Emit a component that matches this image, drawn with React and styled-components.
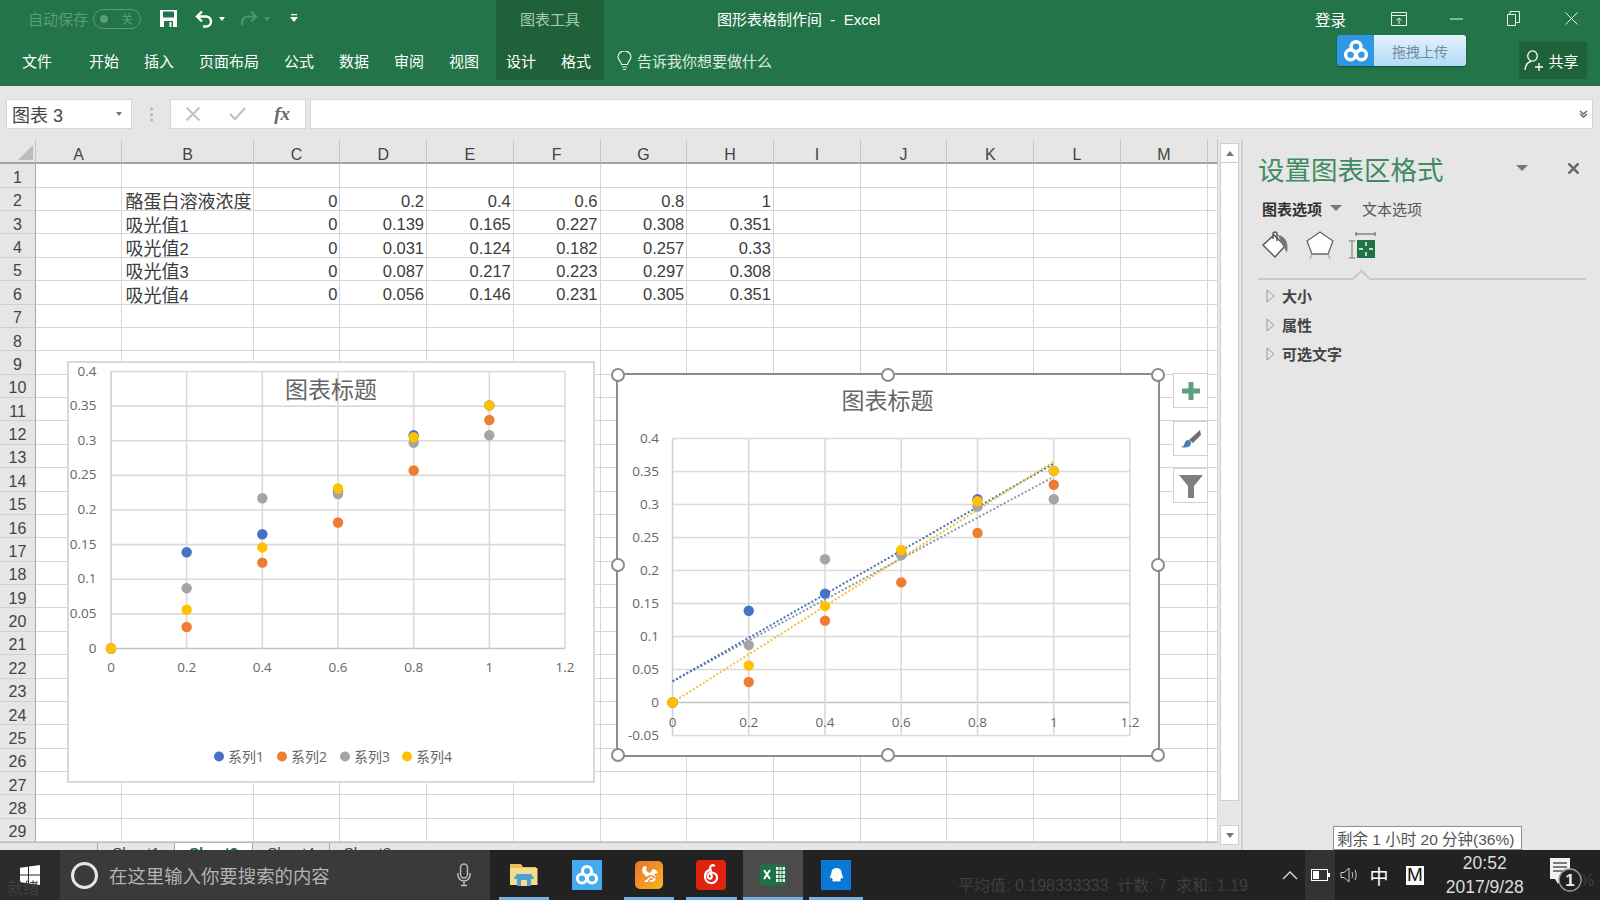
import React from "react";
import styled, { createGlobalStyle } from "styled-components";

const Global = createGlobalStyle`
  html, body { margin: 0; padding: 0; background: #e6e6e6; }
  * { box-sizing: border-box; }
`;
const FONT = `"Liberation Sans", "Noto Sans CJK SC", sans-serif`;
const CHART_FONT = `"Open Sans", "Noto Sans CJK SC", sans-serif`;

const Page = styled.div`
  position: relative; width: 1600px; height: 900px; overflow: hidden;
  display: flex; flex-direction: column; background: #e6e6e6; font-family: ${FONT};
`;

/* ---------- ribbon ---------- */
const Ribbon = styled.header`
  position: relative; height: 86px; flex: none; background: #237549; color: #fff;
  display: grid; grid-template-columns: 496px 108px 1fr; grid-template-rows: 43px 37px;
`;
const Qat = styled.div`display: flex; align-items: center; padding: 0 0 6px 28px;`;
const AutoSave = styled.span`font-size: 15px; color: #5c9c78; width: 65px;`;
const Toggle = styled.span`
  width: 48px; height: 20px; border: 1px solid #5c9c78; border-radius: 10px; display: flex;
  align-items: center; justify-content: space-between; padding: 0 7px 0 6px; color: #5c9c78; font-size: 12px;
  &::before { content: ""; width: 8px; height: 8px; border-radius: 50%; background: #5c9c78; }
`;
const QatIcon = styled.span`display: flex; align-items: center; margin-left: ${(p) => p.$gap}px;`;
const ToolTitle = styled.div`
  background: #1f6239; color: #a8c9b5; font-size: 15px; display: flex; align-items: center;
  justify-content: center; padding-bottom: 6px;
`;
const TitleSide = styled.div`display: flex; align-items: center; padding: 0 0 6px 113px;`;
const DocTitle = styled.span`font-size: 15px; width: 598px; white-space: pre;`;
const SignIn = styled.span`font-size: 15.5px; width: 55px;`;
const WinBtn = styled.span`width: 57.5px; display: flex; justify-content: center; align-items: center;`;
const MenuRow = styled.nav`display: flex; align-items: center; padding: 0 0 2px 22px;`;
const MenuItem = styled.span`font-size: 15px; margin-left: ${(p) => p.$gap}px; white-space: nowrap;`;
const ToolTabs = styled.div`
  background: #1f6239; display: flex; align-items: center; justify-content: center; gap: 25px;
  font-size: 15px; padding: 0 3px 2px 0;
`;
const TellSide = styled.div`display: flex; align-items: center; padding: 0 0 2px 13px; gap: 5px;`;
const TellMe = styled.span`font-size: 15px; color: #dcebe2;`;
const Upload = styled.div`
  position: absolute; left: 1337px; top: 35px; width: 129px; height: 31px; border-radius: 3px; overflow: hidden;
  display: flex; box-shadow: 0 1px 2px #14502e;
`;
const UploadIcon = styled.span`width: 37px; background: #2f97e4; display: flex; align-items: center; justify-content: center;`;
const UploadLabel = styled.span`
  flex: 1; background: linear-gradient(#e4f2fc, #b3dbf6); color: #6f8ba3; font-size: 14px;
  display: flex; align-items: center; justify-content: center;
`;
const Share = styled.div`
  position: absolute; left: 1519px; top: 42px; width: 68px; height: 37px; background: #1f6239;
  display: flex; align-items: center; justify-content: center; gap: 4px; font-size: 15px; padding-right: 3px;
`;

/* ---------- formula bar ---------- */
const FormulaBar = styled.div`
  height: 54px; flex: none; display: flex; align-items: flex-start; padding: 13px 7px 0 6px; color: #444;
`;
const NameBox = styled.div`
  width: 126px; height: 30px; background: #fff; border: 1px solid #d6d6d6; display: flex; align-items: center;
  padding: 0 9px 0 5px; justify-content: space-between; font-size: 18px; color: #444;
`;
const Caret = styled.span`
  width: 0; height: 0; border-left: ${(p) => (p.$big ? 6 : 3)}px solid transparent; border-right: ${(p) => (p.$big ? 6 : 3)}px solid transparent;
  border-top: ${(p) => (p.$big ? 6 : 4)}px solid ${(p) => p.$color || "#777"};
`;
const Grip = styled.span`
  width: 38px; text-align: center; color: #aaa; font-size: 15px; line-height: 30px; font-weight: 700;
`;
const FxBox = styled.div`
  width: 136px; height: 30px; background: #fff; border: 1px solid #d6d6d6; display: flex; align-items: center;
  justify-content: space-between; padding: 0 15px 0 15px;
`;
const Fx = styled.span`font-family: "Liberation Serif", serif; font-style: italic; font-weight: 700; font-size: 19px; color: #666;`;
const Input = styled.div`
  flex: 1; height: 30px; background: #fff; border: 1px solid #d6d6d6; margin-left: 4px; display: flex;
  align-items: center; justify-content: flex-end; padding-right: 4px;
`;

/* ---------- work area ---------- */
const Work = styled.div`flex: 1; display: flex; min-height: 0;`;
const SheetCol = styled.div`width: 1218px; display: flex; flex-direction: column;`;
const Sheet = styled.div`position: relative; height: 702px; overflow: hidden;`;
const Cells = styled.div`
  display: grid; grid-template-columns: 36px 86.4px 131.2px repeat(11, 86.74px) 1fr;
  grid-template-rows: 24.3px repeat(29, 23.38px); background: #fff;
`;
const Corner = styled.div`
  background: #e6e6e6; border-bottom: 2px solid #a6a6a6; border-right: 1px solid #c4c4c4; position: relative;
  &::after {
    content: ""; position: absolute; right: 2px; bottom: 2px; width: 0; height: 0;
    border-left: 15px solid transparent; border-bottom: 15px solid #bdbdbd;
  }
`;
const ColHead = styled.div`
  background: #e6e6e6; border-bottom: 2px solid #a6a6a6; border-right: 1px solid #c4c4c4; color: #444;
  font-size: 16px; display: flex; align-items: center; justify-content: center; padding-top: 7px;
`;
const RowHead = styled.div`
  background: #e6e6e6; border-bottom: 1px solid #d0d0d0; border-right: 1px solid #a6a6a6; color: #444;
  font-size: 16px; display: flex; align-items: center; justify-content: center; padding-top: 5px;
`;
const Cell = styled.div`
  border-right: 1px solid #d6d6d6; border-bottom: 1px solid #d6d6d6; color: #3c3c3c; font-size: 16.5px;
  display: flex; align-items: center; justify-content: ${(p) => (p.$text ? "flex-start" : "flex-end")};
  padding: ${(p) => (p.$text ? 3 : 5)}px 2px 0 ${(p) => (p.$text ? 3 : 0)}px; white-space: nowrap; overflow: hidden;
  ${(p) => p.$text && "font-size: 18px;"}
`;
const Digit = styled.span`font-size: 16.5px;`;

const ChartFrame = styled.div`
  position: absolute; left: ${(p) => p.$x}px; top: ${(p) => p.$y}px; width: ${(p) => p.$w}px; height: ${(p) => p.$h}px;
  background: #fff; border: 2px solid ${(p) => p.$line};
`;
const ChartSvg = styled.svg`position: absolute; left: -2px; top: -2px; overflow: visible;`;
const Handle = styled.span`
  position: absolute; left: ${(p) => p.$x}%; top: ${(p) => p.$y}%; width: 14px; height: 14px; margin: -7px 0 0 -7px;
  border-radius: 50%; background: #fff; border: 2.5px solid #8c8c8c;
`;
const SideBtn = styled.div`
  position: absolute; left: 1173px; top: ${(p) => p.$y}px; width: 35px; height: 35px; background: #fff;
  border: 1px solid #d2d2d2; display: flex; align-items: center; justify-content: center;
`;
const Tabs = styled.div`
  height: 8px; background: #e6e6e6; border-top: 1px solid #bdbdbd; display: flex; padding-left: 97px; overflow: hidden;
  font-size: 15px; color: #444;
`;
const Tab = styled.div`
  height: 24px; padding-top: 1px; text-align: center; width: ${(p) => p.$w}px; border-left: 1px solid #a6a6a6;
  ${(p) => p.$on && "background: #fff; color: #217346; font-weight: 700;"}
`;
const VScroll = styled.div`
  width: 25px; display: flex; flex-direction: column; padding: 3px 2px 5px 2px; border-right: 2px solid #cfcfcf;
`;
const ScrollBtn = styled.div`
  height: 20px; flex: none; background: #fff; border: 1px solid #cfcfcf; display: flex; align-items: center; justify-content: center;
`;
const Tri = styled.span`
  width: 0; height: 0; border-left: 4px solid transparent; border-right: 4px solid transparent;
  ${(p) => (p.$up ? "border-bottom: 5px solid #777;" : "border-top: 5px solid #777;")}
`;
const Thumb = styled.div`height: 638px; flex: none; background: #fff; border: 1px solid #cfcfcf; border-top: 0;`;
const Track = styled.div`flex: 1;`;

/* ---------- format pane ---------- */
const Pane = styled.aside`flex: 1; padding: 12px 14px 0 15px; color: #444;`;
const PaneHead = styled.div`display: flex; align-items: center; height: 32px;`;
const PaneTitle = styled.h2`margin: 0; font-size: 26.5px; font-weight: 400; color: #3d8a63; flex: 1; white-space: nowrap;`;
const PaneClose = styled.span`display: flex; margin: 0 7px 0 40px;`;
const PaneTabs = styled.div`display: flex; align-items: center; height: 20px; margin-top: 14px; padding-left: 4px; font-size: 15px;`;
const PaneTabOn = styled.span`font-weight: 700; color: #333; margin-right: 8px;`;
const PaneTabOff = styled.span`margin-left: 20px; color: #555;`;
const PaneIcons = styled.div`display: flex; align-items: center; height: 38px; margin-top: 9px; padding-left: 4px; gap: 14px;`;
const Rule = styled.div`
  position: relative; height: 2px; background: #c8c8c8; margin-top: 13px;
  &::before {
    content: ""; position: absolute; left: 97px; top: -6px; width: 11px; height: 11px; background: #e6e6e6;
    border-left: 2px solid #c8c8c8; border-top: 2px solid #c8c8c8; transform: rotate(45deg);
  }
`;
const Group = styled.div`display: flex; align-items: center; height: 29px; padding-left: 8px; font-size: 15px; font-weight: 700; color: #444; gap: 7px;`;
const GroupList = styled.div`padding-top: 1px;`;

/* ---------- taskbar ---------- */
const Taskbar = styled.footer`
  position: relative; height: 50px; flex: none; background: #222222; display: flex; align-items: stretch; color: #fff;
`;
const Start = styled.div`width: 60px; background: #2b2b2b; display: flex; align-items: center; justify-content: center;`;
const Search = styled.div`
  width: 430px; background: #3a3a3a; display: flex; align-items: center; padding: 0 19px 0 11px; color: #b3b3b3; font-size: 18.4px;
`;
const Cortana = styled.span`width: 27px; height: 27px; border-radius: 50%; border: 3.5px solid #e6e6e6; margin-right: 11px; flex: none;`;
const SearchText = styled.span`flex: 1; white-space: nowrap;`;
const Apps = styled.div`display: flex; padding-left: 3px;`;
const App_ = styled.div`
  position: relative; width: ${(p) => p.$w || 62.4}px; display: flex; align-items: center; justify-content: center;
  ${(p) => p.$active && "background: #4b4b4b;"}
  &::after {
    content: ""; position: absolute; left: ${(p) => (p.$active ? 0 : 6)}px; right: ${(p) => (p.$active ? 0 : 6)}px; bottom: 0; height: 3px;
    background: ${(p) => (p.$open ? "#76b0e2" : "transparent")};
  }
`;
const Ghost = styled.span`position: absolute; color: #3f3f3f; font-size: ${(p) => p.$size || 18}px; left: ${(p) => p.$x}px; top: ${(p) => p.$y}px; white-space: pre;`;
const Tray = styled.div`position: absolute; left: 1275px; right: 0; top: 0; bottom: 0; display: flex; align-items: center;`;
const TrayItem = styled.span`
  width: ${(p) => p.$w}px; height: 100%; display: flex; align-items: center; justify-content: center;
  ${(p) => p.$hot && "background: #333;"}
  font-size: 19px;
`;
const NoteSlot = styled.span`width: 50px; display: flex; justify-content: center; padding-left: 14px;`;
const ImeM = styled.span`
  background: #fff; color: #111; width: 18px; height: 19px; font-size: 19px; display: flex; align-items: center; justify-content: center;
`;
const Clock = styled.div`
  width: 99.5px; display: flex; flex-direction: column; align-items: center; color: #ddd; font-size: 17.5px; line-height: 24px;
`;
const Tooltip = styled.div`
  position: absolute; left: 1333px; top: 826px; width: 189px; height: 24px; background: #fff; border: 1px solid #8f8f8f;
  font-size: 15.5px; color: #555; display: flex; align-items: center; padding-left: 3px; white-space: nowrap; z-index: 2;
`;

/* ---------- data ---------- */
const COLS = "ABCDEFGHIJKLM".split("");
const TABLE = {
  2: ["酪蛋白溶液浓度", "0", "0.2", "0.4", "0.6", "0.8", "1"],
  3: ["吸光值1", "0", "0.139", "0.165", "0.227", "0.308", "0.351"],
  4: ["吸光值2", "0", "0.031", "0.124", "0.182", "0.257", "0.33"],
  5: ["吸光值3", "0", "0.087", "0.217", "0.223", "0.297", "0.308"],
  6: ["吸光值4", "0", "0.056", "0.146", "0.231", "0.305", "0.351"],
};
const XS = [0, 0.2, 0.4, 0.6, 0.8, 1];
const SERIES = [
  { color: "#4472c4", ys: TABLE[3].slice(1).map(Number), name: "系列1" },
  { color: "#ed7d31", ys: TABLE[4].slice(1).map(Number), name: "系列2" },
  { color: "#a5a5a5", ys: TABLE[5].slice(1).map(Number), name: "系列3" },
  { color: "#ffc000", ys: TABLE[6].slice(1).map(Number), name: "系列4" },
];

function Scatter({ w, h, x0, x1, y4, y0, yMin, titleX, titleY, yLabelX, xLabelY, legend, trends }) {
  const px = (v) => x0 + (v / 1.2) * (x1 - x0);
  const py = (v) => y0 - (v / 0.4) * (y0 - y4);
  const yt = [];
  for (let i = yMin; i <= 8; i++) yt.push(i * 0.05);
  const xt = [0, 0.2, 0.4, 0.6, 0.8, 1, 1.2];
  const bottom = py(yMin * 0.05);
  const fmt = (v) => String(Math.round(v * 100) / 100);
  return (
    <ChartSvg width={w} height={h} fontFamily={CHART_FONT}>
      {yt.map((v) => (
        <line key={v} x1={x0} x2={x1} y1={py(v)} y2={py(v)} stroke={v === 0 ? "#c4c4c4" : "#dadada"} strokeWidth="1.6" />
      ))}
      {xt.map((v) => (
        <line key={v} x1={px(v)} x2={px(v)} y1={y4} y2={bottom} stroke={v === 0 ? "#cfcfcf" : "#dadada"} strokeWidth="1.6" />
      ))}
      {yt.map((v) => (
        <text key={v} x={yLabelX} y={py(v) + 4} textAnchor="end" fontSize="13.5" fill="#666">{fmt(v)}</text>
      ))}
      {xt.map((v) => (
        <text key={v} x={px(v)} y={xLabelY + 5} textAnchor="middle" fontSize="13.5" fill="#666">{fmt(v)}</text>
      ))}
      <text x={titleX} y={titleY + 8} textAnchor="middle" fontSize="23" fill="#666">图表标题</text>
      {trends && trends.map((t, i) => (
        <line key={i} x1={px(0)} y1={py(t.a)} x2={px(1)} y2={py(t.b)} stroke={t.c} strokeWidth="2" strokeDasharray="2 2" />
      ))}
      {SERIES.map((s) => s.ys.map((y, i) => <circle key={s.color + i} cx={px(XS[i])} cy={py(y)} r="5.2" fill={s.color} />))}
      {legend && SERIES.map((s, i) => (
        <g key={s.name}>
          <circle cx={legend.xs[i]} cy={legend.y} r="5" fill={s.color} />
          <text x={legend.xs[i] + 9} y={legend.y + 5} fontSize="14" fill="#666">{s.name}</text>
        </g>
      ))}
    </ChartSvg>
  );
}

/* ---------- icons ---------- */
const SaveIcon = () => (
  <svg width="17" height="17" viewBox="0 0 17 17">
    <path d="M0 0h17v17H0z" fill="#fff" />
    <path d="M3 1.5h11v6H3z" fill="#237549" />
    <path d="M4 11h9v6H4z" fill="#237549" />
    <path d="M9.5 12h2v5h-2z" fill="#fff" />
  </svg>
);
const UndoIcon = ({ c = "#fff" }) => (
  <svg width="19" height="18" viewBox="0 0 19 18" fill="none" stroke={c} strokeWidth="2.4">
    <path d="M7 1.5 2 6.5l5 5" />
    <path d="M2.5 6.5H11a5 5 0 0 1 0 10H8" />
  </svg>
);
const RedoIcon = ({ c }) => (
  <svg width="19" height="18" viewBox="0 0 19 18" fill="none" stroke={c} strokeWidth="2.2">
    <path d="M12 1.5l5 5-5 5" />
    <path d="M16.5 6.5H9a6 6 0 0 0-6 6v3" />
  </svg>
);
const Customize = () => (
  <svg width="8" height="9" viewBox="0 0 8 9"><path d="M1 0h6v1.2H1zM0 3h8L4 8z" fill="#fff" /></svg>
);
const RibbonMode = () => (
  <svg width="16" height="14" viewBox="0 0 16 14" fill="none" stroke="#e8f1ec"><path d="M.5.5h15v13H.5zM.5 3.5h15M8 12V6M5.5 8.5 8 6l2.5 2.5" /></svg>
);
const MinIcon = () => <svg width="13" height="2"><path d="M0 1h13" stroke="#e8f1ec" /></svg>;
const RestoreIcon = () => (
  <svg width="13" height="15" viewBox="0 0 13 15" fill="none" stroke="#e8f1ec"><path d="M.5 3.5h8v11h-8zM3 3.5V.5h9.5v11H8.5" /></svg>
);
const CloseIcon = ({ s = 13, c = "#e8f1ec", w = 1 }) => (
  <svg width={s} height={s} viewBox="0 0 13 13" fill="none" stroke={c} strokeWidth={w}><path d="M.5.5l12 12M12.5.5l-12 12" /></svg>
);
const Bulb = () => (
  <svg width="15" height="20" viewBox="0 0 15 20" fill="none" stroke="#e8f1ec" strokeWidth="1.2"><path d="M4.5 13.5C4 10 1 9 1 6a6.5 6 0 0 1 13 0c0 3-3 4-3.5 7.5zM5 16h5M6 18.5h3" /></svg>
);
const Person = () => (
  <svg width="20" height="22" viewBox="0 0 20 22" fill="none" stroke="#fff" strokeWidth="1.3"><ellipse cx="8.5" cy="6" rx="4.8" ry="5.2" /><path d="M1 20c.5-5 3-8 6-8.5M15 13v8M11 17h8" /></svg>
);
const BaiduRings = ({ s = 24, w = 3.2 }) => (
  <svg width={s} height={s} viewBox="0 0 24 24" fill="none" stroke="#fff" strokeWidth={w}>
    <circle cx="12" cy="8" r="4.6" /><circle cx="7" cy="15.5" r="4.6" /><circle cx="17" cy="15.5" r="4.6" />
  </svg>
);
const Folder = () => (
  <svg width="28" height="24" viewBox="0 0 28 24">
    <path d="M0 1h11l2 3h13v4H0z" fill="#e8c054" />
    <path d="M0 5h27.5v17H0z" fill="#f5dc8e" />
    <path d="M7 11h14l3 4v1h-3v7H7v-7H4v-1z" fill="#4aa3d0" />
    <path d="M11 17h6v6h-6z" fill="#f5dc8e" />
  </svg>
);
const BaiduTile = () => (
  <svg width="30" height="30" viewBox="0 0 30 30"><rect width="30" height="30" fill="#45aaee" /><g transform="translate(3,3)"><g fill="none" stroke="#fff" strokeWidth="3"><circle cx="12" cy="8" r="4.6" /><circle cx="7" cy="15.5" r="4.6" /><circle cx="17" cy="15.5" r="4.6" /></g></g></svg>
);
const UcTile = () => (
  <svg width="28" height="28" viewBox="0 0 28 28">
    <defs><linearGradient id="uc" x1="0" y1="0" x2="1" y2="1"><stop offset="0" stopColor="#e9702b" /><stop offset="1" stopColor="#fbb61d" /></linearGradient></defs>
    <rect width="28" height="28" rx="5" fill="url(#uc)" />
    <path d="M9 5c-3 3-2 7 1 9 2 2 1 5-1 7h7c5 0 6-5 3-8l4-1-2-3-3-1-3 4c-3-1-5-3-3-6z" fill="#fff" />
    <path d="M11 19a5 5 0 0 1 9-2M14 21a3 3 0 0 1 4-3" fill="none" stroke="#e9802b" strokeWidth="1.4" />
  </svg>
);
const NeteaseTile = () => (
  <svg width="30" height="30" viewBox="0 0 30 30" fill="none">
    <rect width="30" height="30" rx="4" fill="#e0230f" />
    <path d="M18 5.5c-2-.8-4 .3-3.800 3l1.600 8c.3 2.500-3.400 2.800-4 .5-.6-2.500 1.800-4.700 4.200-4.500 3.500.3 5.500 3 5 6-.6 3-3.500 5-6.500 4.500-3.500-.5-6-3.500-5.500-7.500.3-2.500 2-4.500 4-5.500" stroke="#fff" strokeWidth="2.2" strokeLinecap="round" />
  </svg>
);
const ExcelTile = () => (
  <svg width="26" height="24" viewBox="0 0 26 24">
    <path d="M0 2l15-2v24L0 22z" fill="#1e7145" />
    <path d="M15 2h11v20H15z" fill="#1e7145" />
    <path d="M16 4h9v3h-9zM16 8h9v3h-9zM16 12h9v3h-9zM16 16h9v3h-9z" fill="#e7f0ea" />
    <path d="M19 3v17M22 3v17" stroke="#1e7145" />
    <path d="M4 7l6 9M10 7l-6 9" stroke="#fff" strokeWidth="2" />
  </svg>
);
const QQTile = () => (
  <svg width="30" height="30" viewBox="0 0 30 30">
    <rect width="30" height="30" fill="#0a78d7" />
    <path d="M15 8c-3 0-4.600 2.200-4.600 5 0 1-1.400 3-1.400 4.500 0 1 .8.800 1.500.2.300 1 .9 1.600 1.500 2-1 .4-1.200 1.800 1 1.800 1 0 2-.3 2.500-.6.500.3 1.500.6 2.500.6 2.200 0 2-1.400 1-1.800.6-.4 1.200-1 1.500-2 .7.600 1.500.8 1.500-.2 0-1.500-1.400-3.500-1.400-4.500 0-2.800-1.600-5-4.600-5z" fill="#fff" />
  </svg>
);
const WinLogo = () => (
  <svg width="20" height="20" viewBox="0 0 20 20" fill="#fff"><path d="M0 2.800 8 1.700V9.500H0zM9 1.500 20 0v9.500H9zM0 10.500h8v7.800L0 17.200zM9 10.500h11V20L9 18.500z" /></svg>
);
const Mic = () => (
  <svg width="14" height="24" viewBox="0 0 14 24" fill="none" stroke="#bdbdbd" strokeWidth="1.4"><rect x="3.500" y="1" width="7" height="14" rx="3.500" /><path d="M1 10v2a6 6 0 0 0 12 0v-2M7 18v4M4 22.500h6" /></svg>
);
const Chevron = () => <svg width="16" height="10" viewBox="0 0 16 10" fill="none" stroke="#ddd" strokeWidth="1.4"><path d="M1 9l7-7 7 7" /></svg>;
const Battery = () => (
  <svg width="19" height="12" viewBox="0 0 19 12"><rect x=".5" y=".5" width="16" height="11" fill="none" stroke="#fff" /><rect x="2" y="2" width="6" height="8" fill="#fff" /><rect x="17" y="4" width="2" height="4" fill="#fff" /></svg>
);
const Speaker = () => (
  <svg width="18" height="18" viewBox="0 0 18 18" fill="none" stroke="#ccc"><path d="M1 6.500h3L9 2v14l-5-4.500H1zM12 6c1 2 1 4 0 6M15 4c1.500 3 1.500 7 0 10" /></svg>
);
const NoteIcon = () => (
  <svg width="36" height="36" viewBox="0 0 36 36">
    <path d="M1 1h20v21h-9l-3 5-3-5H1z" fill="#f2f2f2" />
    <path d="M4 6h14M4 10h14M4 14h11" stroke="#555" strokeWidth="1.3" />
    <circle cx="21" cy="23" r="11" fill="#222" stroke="#999" strokeWidth="1.3" />
    <text x="21" y="29" textAnchor="middle" fontSize="17" fontWeight="700" fill="#eee" fontFamily="Liberation Sans">1</text>
  </svg>
);
const Bucket = () => (
  <svg width="30" height="30" viewBox="0 0 30 30" fill="none" stroke="#555" strokeWidth="1.4">
    <path d="M1 14 12 4l11 11-10 11z" fill="#fff" />
    <path d="M11 8V3a2 2 0 0 1 4 0v7" />
    <path d="M16 4c7 1 11 7 9 18-2-5-4-6-5-9z" fill="#777" stroke="none" />
  </svg>
);
const Pentagon = () => (
  <svg width="28" height="30" viewBox="0 0 28 30" fill="#fff" stroke="#666" strokeWidth="1.3">
    <path d="M14 1 27 10l-5 13H6L1 10z" />
    <path d="M6 23l-2 5M22 23l2 5" fill="none" stroke="#aaa" />
  </svg>
);
const SizeIcon = () => (
  <svg width="30" height="30" viewBox="0 0 30 30">
    <path d="M8 3h19M8 1v4M27 1v4" stroke="#555" fill="none" />
    <path d="M1 10h6M1 27h6M4 10v17" stroke="#777" fill="none" />
    <rect x="9" y="9" width="18" height="18" fill="#1f7346" />
    <path d="M18 11v4M18 21v4M11 18h4M21 18h4" stroke="#fff" strokeWidth="1.4" />
  </svg>
);
const PlusIcon = () => <svg width="18" height="18" viewBox="0 0 18 18"><path d="M6.500 0h5v6.500H18v5h-6.500V18h-5v-6.500H0v-5h6.500z" fill="#5c9f83" /></svg>;
const BrushIcon = () => (
  <svg width="22" height="22" viewBox="0 0 22 22">
    <path d="M9 12 20 2l1 5-8 8z" fill="#707070" />
    <path d="M8 12c-3 0-3 3-4 5-.5 1-2 2-3 2 3 1 9 1 10-3 .5-2-1-4-3-4z" fill="#4a80b8" />
  </svg>
);
const FunnelIcon = () => <svg width="24" height="24" viewBox="0 0 24 24"><path d="M0 1h24l-9 11v12H9V12z" fill="#7f7f7f" /></svg>;
const PaneTri = () => <svg width="9" height="14" viewBox="0 0 9 14" fill="#e6e6e6" stroke="#999"><path d="M1 1l7 6-7 6z" /></svg>;

export default function App() {
  const handles = [[0, 0], [50, 0], [100, 0], [0, 50], [100, 50], [0, 100], [50, 100], [100, 100]];
  return (
    <Page>
      <Global />
      <Ribbon>
        <Qat>
          <AutoSave>自动保存</AutoSave>
          <Toggle>关</Toggle>
          <QatIcon $gap={19}><SaveIcon /></QatIcon>
          <QatIcon $gap={18}><UndoIcon /></QatIcon>
          <QatIcon $gap={5}><Caret $color="#fff" /></QatIcon>
          <QatIcon $gap={14}><RedoIcon c="#4f9570" /></QatIcon>
          <QatIcon $gap={6}><Caret $color="#4f9570" /></QatIcon>
          <QatIcon $gap={20}><Customize /></QatIcon>
        </Qat>
        <ToolTitle>图表工具</ToolTitle>
        <TitleSide>
          <DocTitle>图形表格制作间  -  Excel</DocTitle>
          <SignIn>登录</SignIn>
          <WinBtn><RibbonMode /></WinBtn>
          <WinBtn><MinIcon /></WinBtn>
          <WinBtn><RestoreIcon /></WinBtn>
          <WinBtn><CloseIcon /></WinBtn>
        </TitleSide>
        <MenuRow>
          <MenuItem $gap={0}>文件</MenuItem>
          <MenuItem $gap={37}>开始</MenuItem>
          <MenuItem $gap={25}>插入</MenuItem>
          <MenuItem $gap={25}>页面布局</MenuItem>
          <MenuItem $gap={25}>公式</MenuItem>
          <MenuItem $gap={25}>数据</MenuItem>
          <MenuItem $gap={25}>审阅</MenuItem>
          <MenuItem $gap={25}>视图</MenuItem>
        </MenuRow>
        <ToolTabs><span>设计</span><span>格式</span></ToolTabs>
        <TellSide><Bulb /><TellMe>告诉我你想要做什么</TellMe></TellSide>
        <Upload>
          <UploadIcon><BaiduRings s={26} /></UploadIcon>
          <UploadLabel>拖拽上传</UploadLabel>
        </Upload>
        <Share><Person />共享</Share>
      </Ribbon>

      <FormulaBar>
        <NameBox>图表 3<Caret /></NameBox>
        <Grip>⋮</Grip>
        <FxBox>
          <CloseIcon s={14} c="#c4c4c4" w={2} />
          <svg width="17" height="14" viewBox="0 0 17 14" fill="none" stroke="#c4c4c4" strokeWidth="2.400"><path d="M1 7l5 5L16 1" /></svg>
          <Fx>fx</Fx>
        </FxBox>
        <Input>
          <svg width="9" height="8" viewBox="0 0 9 8" fill="none" stroke="#666" strokeWidth="1.500"><path d="M1 1l3.500 3L8 1M1 4l3.500 3L8 4" /></svg>
        </Input>
      </FormulaBar>

      <Work>
        <SheetCol>
          <Sheet>
            <Cells>
              <Corner />
              {COLS.map((c) => <ColHead key={c}>{c}</ColHead>)}
              <ColHead />
              {Array.from({ length: 29 }, (_, r) => {
                const n = r + 1;
                const row = TABLE[n];
                return (
                  <React.Fragment key={n}>
                    <RowHead>{n}</RowHead>
                    {Array.from({ length: 14 }, (_, c) => {
                      const v = row && c >= 1 && c <= 7 ? row[c - 1] : "";
                      const label = c === 1 && v;
                      return (
                        <Cell key={c} $text={c === 1}>
                          {label && /\d$/.test(v) ? <span>{v.slice(0, -1)}<Digit>{v.slice(-1)}</Digit></span> : v}
                        </Cell>
                      );
                    })}
                  </React.Fragment>
                );
              })}
            </Cells>

            <ChartFrame $x={67} $y={221} $w={528} $h={422} $line="#d9d9d9">
              <Scatter
                w={528} h={422} x0={44} x1={498} y4={10.5} y0={287.5} yMin={0}
                titleX={264} titleY={28.5} yLabelX={29.5} xLabelY={306}
                legend={{ y: 395.5, xs: [152, 215, 278, 340] }}
              />
            </ChartFrame>

            <ChartFrame $x={615.5} $y={232.5} $w={544} $h={384.5} $line="#8c8c8c">
              <Scatter
                w={544} h={384.5} x0={56.5} x1={514} y4={65.5} y0={329.5} yMin={-1}
                titleX={271.5} titleY={28} yLabelX={43} xLabelY={349}
                trends={[
                  { a: 0.032, b: 0.342, c: "#8f98a8" },
                  { a: 0.032, b: 0.362, c: "#4a72b4" },
                  { a: 0, b: 0.365, c: "#f2c233" },
                ]}
              />
              {handles.map(([x, y]) => <Handle key={`${x}-${y}`} $x={x} $y={y} />)}
            </ChartFrame>

            <SideBtn $y={233}><PlusIcon /></SideBtn>
            <SideBtn $y={281}><BrushIcon /></SideBtn>
            <SideBtn $y={328}><FunnelIcon /></SideBtn>
          </Sheet>
          <Tabs>
            <Tab $w={77}>Sheet1</Tab>
            <Tab $w={78} $on>Sheet2</Tab>
            <Tab $w={77}>Sheet4</Tab>
            <Tab $w={76}>Sheet3</Tab>
          </Tabs>
        </SheetCol>
        <VScroll>
          <ScrollBtn><Tri $up /></ScrollBtn>
          <Thumb />
          <Track />
          <ScrollBtn><Tri /></ScrollBtn>
        </VScroll>
        <Pane>
          <PaneHead>
            <PaneTitle>设置图表区格式</PaneTitle>
            <Caret $big $color="#777" />
            <PaneClose><CloseIcon s={11} c="#666" w={3} /></PaneClose>
          </PaneHead>
          <PaneTabs>
            <PaneTabOn>图表选项</PaneTabOn>
            <Caret $big $color="#777" />
            <PaneTabOff>文本选项</PaneTabOff>
          </PaneTabs>
          <PaneIcons><Bucket /><Pentagon /><SizeIcon /></PaneIcons>
          <Rule />
          <GroupList>
            <Group><PaneTri />大小</Group>
            <Group><PaneTri />属性</Group>
            <Group><PaneTri />可选文字</Group>
          </GroupList>
        </Pane>
      </Work>

      <Tooltip>剩余 1 小时 20 分钟(36%)</Tooltip>

      <Taskbar>
        <Start><WinLogo /></Start>
        <Search>
          <Cortana />
          <SearchText>在这里输入你要搜索的内容</SearchText>
          <Mic />
        </Search>
        <Apps>
          <App_ $open><Folder /></App_>
          <App_><BaiduTile /></App_>
          <App_ $open><UcTile /></App_>
          <App_ $open><NeteaseTile /></App_>
          <App_ $open $active $w={60}><ExcelTile /></App_>
          <App_ $open $w={66}><QQTile /></App_>
        </Apps>
        <Ghost $x={7} $y={25} $size={16}>就绪</Ghost>
        <Ghost $x={958} $y={22} $size={16}>平均值: 0.198333333  计数: 7  求和: 1.19</Ghost>
        <Ghost $x={1580} $y={22} $size={16}>%</Ghost>
        <Tray>
          <TrayItem $w={30}><Chevron /></TrayItem>
          <TrayItem $w={30} $hot><Battery /></TrayItem>
          <TrayItem $w={28}><Speaker /></TrayItem>
          <TrayItem $w={32}>中</TrayItem>
          <TrayItem $w={40}><ImeM>M</ImeM></TrayItem>
          <Clock><span>20:52</span><span>2017/9/28</span></Clock>
          <NoteSlot><NoteIcon /></NoteSlot>
        </Tray>
      </Taskbar>
    </Page>
  );
}
